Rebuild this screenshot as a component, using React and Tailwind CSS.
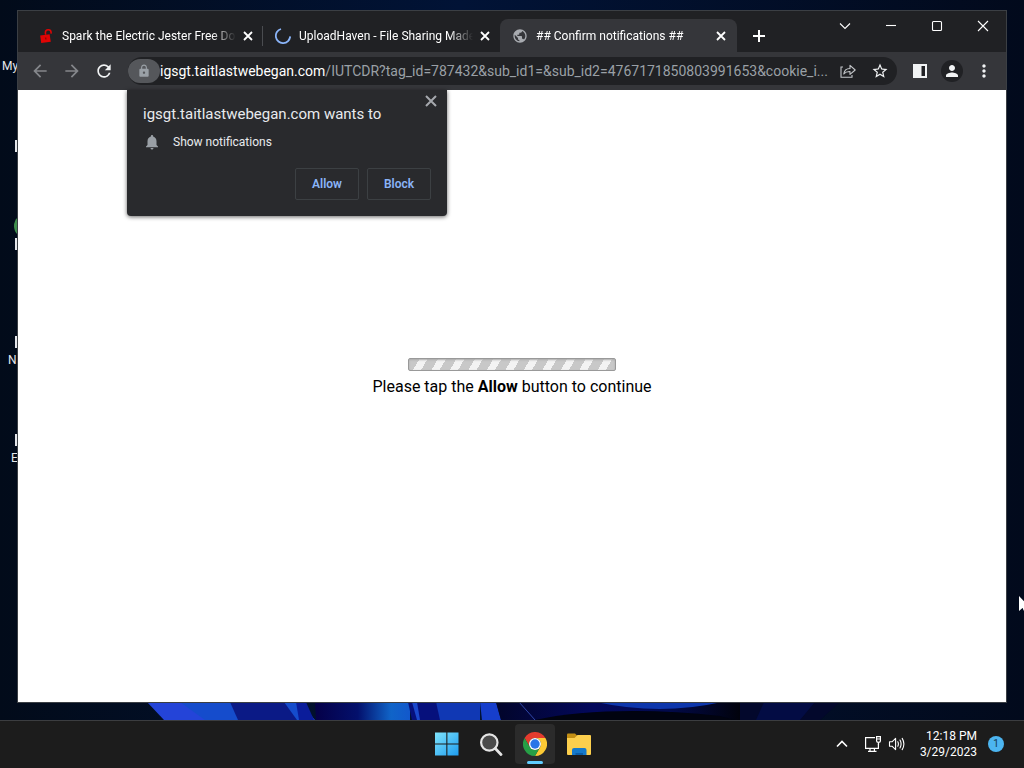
import React from 'react';
import { MdArrowBack, MdArrowForward, MdLock, MdMoreVert, MdNotifications, MdPerson, MdPublic, MdRefresh, MdStarBorder } from 'react-icons/md';

// Data
const URL_HOST = 'igsgt.taitlastwebegan.com';
const URL_PATH = '/IUTCDR?tag_id=787432&sub_id1=&sub_id2=4767171850803991653&cookie_i...';

/* ---------- Icons ---------- */

const CrossIcon = ({ size = 16, strokeWidth = 2, inset = 4 }) => (
  <svg width={size} height={size} viewBox="0 0 16 16" fill="none" stroke="currentColor" strokeWidth={strokeWidth}>
    <path d={`M${inset} ${inset} L${16 - inset} ${16 - inset} M${16 - inset} ${inset} L${inset} ${16 - inset}`} />
  </svg>
);

const OpenLockIcon = () => (
  <svg width="16" height="16" viewBox="0 0 16 16" className="shrink-0">
    <path d="M2.2 7.6 L11.6 6.2 L12.8 13.8 L3.2 15 Z" fill="#e00404" />
    <path d="M7.6 6.8 L7.4 4.4 C7.4 1 12.8 0.8 13 4 L13.2 5.6" fill="none" stroke="#e00404" strokeWidth="1.6" />
    <path d="M7.6 9.5 L7.9 11.5" stroke="#8d0505" strokeWidth="1.4" />
  </svg>
);

const SpinnerIcon = () => (
  <svg width="16" height="16" viewBox="0 0 16 16" fill="none" className="shrink-0">
    <path d="M6 1 A7.2 7.2 0 1 0 15.2 8.4" stroke="#8ab4f8" strokeWidth="1.8" />
  </svg>
);

const ShareIcon = () => (
  <svg width="18" height="18" viewBox="0 0 18 18" fill="none" stroke="#c4c7ca" strokeWidth="1.1">
    <path d="M4 5 H2 V15.3 H13 V13" />
    <path d="M4.8 12 C5.2 8.4 7.6 6.6 11 6.5 V3.3 L16.2 8 L11 12.4 V9.5 C8.2 9.4 6.2 10.2 4.8 12 Z" strokeLinejoin="round" />
  </svg>
);

const SidePanelIcon = () => (
  <svg width="16" height="16" viewBox="0 0 16 16">
    <path d="M1 1 H15 V15 H1 Z" fill="#f1f3f4" />
    <path d="M9.5 3 H13 V13 H9.5 Z" fill="#202124" />
  </svg>
);

const WindowsIcon = () => (
  <svg width="24" height="24" viewBox="0 0 24 24">
    <defs>
      <linearGradient id="win" x1="0" y1="0" x2="1" y2="1">
        <stop offset="0" stopColor="#7fe3fb" />
        <stop offset="1" stopColor="#1e9df0" />
      </linearGradient>
    </defs>
    <path d="M0 0.5 H11.3 V11.5 H0 Z M12.4 0.5 H23.5 V11.5 H12.4 Z M0 12.6 H11.3 V23.5 H0 Z M12.4 12.6 H23.5 V23.5 H12.4 Z" fill="url(#win)" />
  </svg>
);

const SearchIcon = () => (
  <svg width="24" height="24" viewBox="0 0 24 24" fill="none">
    <circle cx="10.3" cy="10.5" r="8.2" fill="#4a4a4a" stroke="#e4e4e4" strokeWidth="2.2" />
    <path d="M16.3 16.6 L22 22.4" stroke="#e4e4e4" strokeWidth="2.8" strokeLinecap="round" />
  </svg>
);

const ChromeIcon = () => (
  <svg width="24" height="24" viewBox="0 0 24 24">
    <path d="M12 6 H22.4 A12 12 0 0 0 1.6 6 L6.8 15 A6 6 0 0 1 12 6 Z" fill="#e33b2e" />
    <path d="M22.4 6 A12 12 0 0 1 12 24 L17.2 15 A6 6 0 0 0 12 6 Z" fill="#fcc934" />
    <path d="M12 24 A12 12 0 0 1 1.6 6 L6.8 15 A6 6 0 0 0 17.2 15 Z" fill="#269f46" />
    <circle cx="12" cy="12" r="6" fill="#fff" />
    <circle cx="12" cy="12" r="4.7" fill="#2a75e8" />
  </svg>
);

const FolderIcon = () => (
  <svg width="26" height="24" viewBox="0 0 26 24">
    <path d="M1 2.5 Q1 1.5 2 1.5 H9 L11.5 4 V9 H1 Z" fill="#c48f14" />
    <path d="M1 6 H8.5 L11.5 3 H24 Q25 3 25 4 V22 Q25 23 24 23 H2 Q1 23 1 22 Z" fill="#fccf4d" />
    <path d="M6 23 V18 Q6 16 8 16 H18.5 Q20.5 16 20.5 18 V23 Z" fill="#1579cb" />
    <path d="M9.5 23 V21 H17 V23 Z" fill="#0c5da6" />
  </svg>
);

const NetworkIcon = () => (
  <svg width="18" height="18" viewBox="0 0 18 18" fill="none" stroke="#fff" strokeWidth="1.2">
    <path d="M11 2.6 H1.6 V13.4 H14.4 V8.5 M6 13.5 V16.4 M10.4 13.5 V16.4 M4 16.4 H12.5" />
    <path d="M12.6 1.6 H16.4 V6 Q16.4 7.4 14.5 7.4 Q12.6 7.4 12.6 6 Z M12.6 4 H16.4 M14.5 7.4 V10" />
  </svg>
);

const VolumeIcon = () => (
  <svg width="18" height="18" viewBox="0 0 18 18" fill="none" stroke="#fff" strokeWidth="1.1" strokeLinejoin="round">
    <path d="M1.5 6.8 H4 L7.6 3.4 V14.6 L4 11.2 H1.5 Z" />
    <path d="M9.8 6.8 Q11 9 9.8 11.2 M12 5 Q14.2 9 12 13 M14.2 3.4 Q17.6 9 14.2 14.6" strokeLinecap="round" />
  </svg>
);

/* ---------- Desktop ---------- */

const Wallpaper = () => (
  <svg className="absolute bottom-0 left-0 h-[18px] w-full" viewBox="0 0 1024 18" preserveAspectRatio="none">
    <defs>
      <linearGradient id="bloomA">
        <stop offset="0" stopColor="#050048" />
        <stop offset="0.45" stopColor="#03106c" />
        <stop offset="0.8" stopColor="#1064c8" />
        <stop offset="1" stopColor="#1258cc" />
      </linearGradient>
      <linearGradient id="bloomB">
        <stop offset="0" stopColor="#02052a" />
        <stop offset="0.4" stopColor="#03085c" />
        <stop offset="0.7" stopColor="#020a4c" />
        <stop offset="1" stopColor="#01020c" />
      </linearGradient>
    </defs>
    <path d="M147 0 H300 L315 18 H164 Z" fill="#2444d8" />
    <path d="M180 0 H300 V18 H205 Z" fill="#154ccc" />
    <path d="M230 0 H284 L297 18 H238 Z" fill="#0b1a86" />
    <path d="M296 0 H306 L314 18 H299 Z" fill="#0a1c9a" />
    <path d="M315 0 H410 V18 H316 Z" fill="url(#bloomA)" />
    <path d="M408 0 H436 L442 18 H412 Z" fill="#06107c" />
    <path d="M412 0 L417 18 H420 L417 0 Z" fill="#1a48cc" />
    <path d="M436 0 H480 V18 H440 Z" fill="#1038b4" />
    <path d="M480 0 H496 L501 18 H482 Z" fill="#163ecc" />
    <path d="M496 0 H740 V18 H501 Z" fill="url(#bloomB)" />
    <path d="M519 0 L535 18" stroke="#3047a8" strokeWidth="1" />
    <path d="M535 18 C580 8 650 6 720 14 L735 18 Z" fill="#010310" />
    <path d="M596 0 Q660 14 722 0 Z" fill="#0d36ac" />
    <path d="M740 0 H840 L820 18 H740 Z" fill="#03082c" />
    <path d="M764 0 L756 18 H800 L815 0 Z" fill="#030c44" />
  </svg>
);

const DesktopIcons = () => (
  <div className="text-xs text-gray-200">
    <span className="absolute left-0.5 top-[58px] leading-4">My</span>
    <span className="absolute left-2 top-[352px] leading-4">N</span>
    <span className="absolute left-[11px] top-[450px] leading-4">E</span>
    <i className="absolute left-[15px] top-[140px] h-3 w-3 bg-gray-200" />
    <i className="absolute left-[14px] top-[214px] h-6 w-6 rounded-full bg-[#3f8f4d]" />
    <i className="absolute left-[15px] top-[238px] h-3 w-3 bg-gray-200" />
    <i className="absolute left-[15px] top-[336px] h-3 w-3 bg-gray-200" />
    <i className="absolute left-[15px] top-[434px] h-3 w-3 bg-gray-200" />
  </div>
);

/* ---------- Browser ---------- */

const Tab = ({ icon, title, active, divider }) => (
  <div
    className={
      active
        ? 'relative flex w-[237px] items-center rounded-t-lg bg-[#35363a] pl-3 pr-2'
        : 'relative flex w-[237px] items-center pl-3 pr-[7px]'
    }
  >
    {icon}
    <button
      role="tab"
      aria-selected={!!active}
      className="ml-2 mr-1 flex-1 overflow-hidden whitespace-nowrap text-left text-xs text-white [mask-image:linear-gradient(to_right,#000_86%,transparent)]"
    >
      {title}
    </button>
    <button aria-label="Close tab" className="text-white">
      <CrossIcon strokeWidth={1.8} />
    </button>
    {divider && <span className="absolute right-0 top-[7px] h-5 w-px bg-[#4a4c50]" />}
  </div>
);

const CaptionButton = ({ label, children }) => (
  <button aria-label={label} className="flex h-[29px] w-[46px] items-center justify-center text-white">
    <svg width="12" height="12" viewBox="0 0 12 12" fill="none" stroke="currentColor" strokeWidth="1.1">
      {children}
    </svg>
  </button>
);

const TabStrip = () => (
  <div className="flex h-[41px] shrink-0 bg-[#202124] pl-2">
    <div role="tablist" className="mt-2 flex">
      <Tab icon={<OpenLockIcon />} title="Spark the Electric Jester Free Dow" divider />
      <Tab icon={<SpinnerIcon />} title="UploadHaven - File Sharing Made" />
      <Tab icon={<MdPublic className="h-4 w-4 shrink-0 text-[#a8abb0]" />} title="## Confirm notifications ##" active />
      <button aria-label="New tab" className="ml-2 flex w-7 items-center justify-center text-white">
        <svg width="14" height="14" viewBox="0 0 14 14" stroke="currentColor" strokeWidth="2">
          <path d="M7 1 V13 M1 7 H13" />
        </svg>
      </button>
    </div>
    <div className="ml-auto flex">
      <CaptionButton label="Search tabs"><path d="M1 3.5 L6 8.5 L11 3.5" /></CaptionButton>
      <CaptionButton label="Minimize"><path d="M1 5.5 H11" /></CaptionButton>
      <CaptionButton label="Maximize"><rect x="1.5" y="1.5" width="9" height="9" rx="1" /></CaptionButton>
      <CaptionButton label="Close"><path d="M1 1 L11 11 M11 1 L1 11" /></CaptionButton>
    </div>
  </div>
);

const ToolButton = ({ label, children }) => (
  <button aria-label={label} className="flex h-7 w-8 shrink-0 items-center justify-center">
    {children}
  </button>
);

const Toolbar = () => (
  <div className="flex h-[38px] shrink-0 items-center bg-[#35363a] px-1.5 text-[#f1f3f4]">
    <ToolButton label="Back"><MdArrowBack className="h-5 w-5 text-[#85878b]" /></ToolButton>
    <ToolButton label="Forward"><MdArrowForward className="h-5 w-5 text-[#85878b]" /></ToolButton>
    <ToolButton label="Reload"><MdRefresh className="h-5 w-5" /></ToolButton>

    {/* Address bar */}
    <div className="ml-2 mr-[7px] flex h-7 min-w-0 flex-1 items-center rounded-full bg-[#202124] pr-px">
      <button aria-label="View site information" className="flex h-6 w-8 shrink-0 items-center justify-center rounded-full bg-[#55575b]">
        <MdLock className="h-3.5 w-3.5 text-[#9aa0a6]" />
      </button>
      <div
        role="textbox"
        aria-label="Address and search bar"
        className="min-w-0 flex-1 overflow-hidden whitespace-nowrap text-sm text-[#9aa0a6]"
      >
        <span className="text-white">{URL_HOST}</span>{URL_PATH}
      </div>
      <ToolButton label="Share this page"><ShareIcon /></ToolButton>
      <ToolButton label="Bookmark this tab"><MdStarBorder className="h-[18px] w-[18px]" /></ToolButton>
    </div>

    <ToolButton label="Side panel"><SidePanelIcon /></ToolButton>
    <ToolButton label="Profile">
      <span className="flex h-[22px] w-[22px] items-center justify-center rounded-full bg-[#202124]">
        <MdPerson className="h-[18px] w-[18px]" />
      </span>
    </ToolButton>
    <ToolButton label="Menu"><MdMoreVert className="h-5 w-5" /></ToolButton>
  </div>
);

const PermissionPopup = () => (
  <div
    role="dialog"
    aria-label="Notification permission"
    className="absolute left-[109px] top-0 w-80 rounded-b bg-[#292a2d] p-4 text-[#e8eaed] shadow-[0_1px_4px_rgba(0,0,0,0.6)]"
  >
    <button aria-label="Dismiss" className="absolute right-2 top-[3px] text-[#a5a8ad]">
      <CrossIcon strokeWidth={2} inset={3} />
    </button>
    <h2 className="whitespace-nowrap text-[15px] leading-4">{URL_HOST} wants to</h2>
    <p className="mt-[11px] flex items-center text-xs leading-4">
      <MdNotifications className="mr-3 h-[18px] w-[18px] text-[#9aa0a6]" />
      Show notifications
    </p>
    <div className="mt-[17px] flex justify-end gap-2 text-xs font-semibold text-[#8ab4f8]">
      <button className="h-8 w-16 rounded-xs border border-[#3c4043]">Allow</button>
      <button className="h-8 w-16 rounded-xs border border-[#3c4043]">Block</button>
    </div>
  </div>
);

const Page = () => (
  <main className="relative flex-1 bg-white">
    <PermissionPopup />
    <div className="flex flex-col items-center pt-[268px]">
      <div
        role="progressbar"
        aria-label="Loading"
        className="h-[13px] w-52 rounded-xs border border-[#999] bg-[repeating-linear-gradient(120deg,#c8c8c8_0,#c8c8c8_9px,#f3f3f3_9px,#f3f3f3_16px)] shadow-[inset_0_1px_2px_#aaa]"
      />
      <p className="mt-1 text-base leading-6 text-black">
        Please tap the <b>Allow</b> button to continue
      </p>
    </div>
  </main>
);

/* ---------- Taskbar ---------- */

const TaskButton = ({ label, active, children }) => (
  <button
    aria-label={label}
    className={
      active
        ? 'relative flex h-10 w-10 items-center justify-center rounded bg-[#2b2b2b]'
        : 'relative flex h-10 w-10 items-center justify-center rounded'
    }
  >
    {children}
    {active && <span className="absolute bottom-0 left-3 h-[3px] w-4 rounded-full bg-[#60cdff]" />}
  </button>
);

const Taskbar = () => (
  <footer className="grid h-12 shrink-0 grid-cols-[1fr_auto_1fr] items-center border-t border-[#3b3d40] bg-[#1c1c1c] pb-px">
    <div />
    <nav className="flex gap-1 pl-0.5">
      <TaskButton label="Start"><WindowsIcon /></TaskButton>
      <TaskButton label="Search"><SearchIcon /></TaskButton>
      <TaskButton label="Google Chrome" active><ChromeIcon /></TaskButton>
      <TaskButton label="File Explorer"><FolderIcon /></TaskButton>
    </nav>
    <div className="flex items-center justify-end pr-5 text-white">
      <button aria-label="Show hidden icons" className="mr-4">
        <svg width="12" height="12" viewBox="0 0 12 12" fill="none" stroke="currentColor" strokeWidth="1.6">
          <path d="M1 8.5 L6 3.5 L11 8.5" />
        </svg>
      </button>
      <button aria-label="Network and volume" className="flex gap-1.5">
        <NetworkIcon />
        <VolumeIcon />
      </button>
      <button className="ml-3.5 text-right text-xs leading-4">
        <span className="block">12:18 PM</span>
        <span className="block">3/29/2023</span>
      </button>
      <button aria-label="Notifications" className="ml-[11px] h-4 w-4 rounded-full bg-[#4cb5f0] text-center text-[10px] leading-4 text-[#12384f]">
        1
      </button>
    </div>
  </footer>
);

const App = () => (
  <div className="flex h-screen flex-col overflow-hidden font-['Roboto','Noto_Sans',sans-serif]">
    <div className="relative flex-1 overflow-hidden bg-[linear-gradient(to_right,#020b1a,#011336_45%,#020a1c)]">
      <Wallpaper />
      <DesktopIcons />
      <div className="absolute bottom-[18px] left-[18px] right-[18px] top-[11px] flex flex-col shadow-[0_0_0_1px_#3b3f44]">
        <TabStrip />
        <Toolbar />
        <Page />
      </div>
      {/* Mouse pointer */}
      <svg className="absolute right-[-6px] top-[596px]" width="12" height="18" viewBox="0 0 12 18">
        <path d="M1 0 V15 L4.5 12 L7 17 L9 16 L7 11 H11.5 Z" fill="#fff" />
      </svg>
    </div>
    <Taskbar />
  </div>
);

export default App;
